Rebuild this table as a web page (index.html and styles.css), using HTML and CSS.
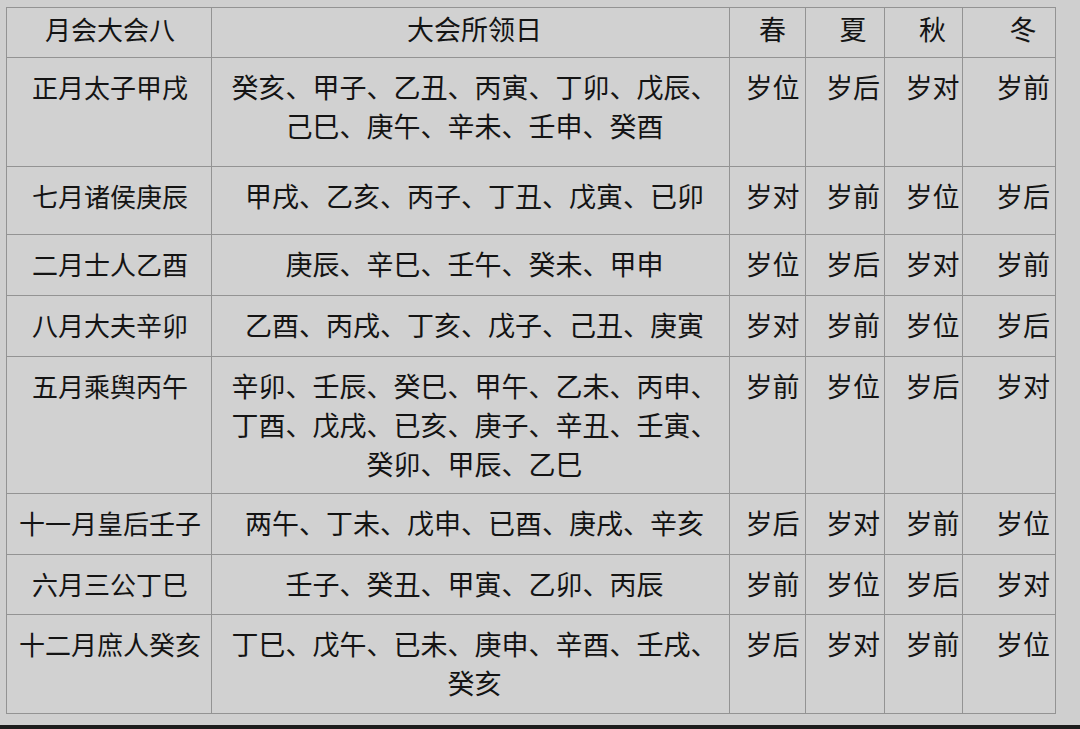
FILE: index.html
```html
<!DOCTYPE html>
<html lang="zh">
<head>
<meta charset="utf-8">
<link rel="stylesheet" href="styles.css">
</head>
<body>
<div class="page">
  <table class="grid">
    <colgroup>
      <col class="c1"><col class="c2"><col class="c3"><col class="c4"><col class="c5"><col class="c6">
    </colgroup>
    <tr class="head">
      <td class="name">月会大会八</td><td class="days">大会所领日</td><td class="s1">春</td><td class="s2">夏</td><td class="s3">秋</td><td class="s4">冬</td>
    </tr>
    <tr class="r1">
      <td class="name">正月太子甲戌</td><td class="days">癸亥、甲子、乙丑、丙寅、丁卯、戊辰、<br>己巳、庚午、辛未、壬申、癸酉</td><td class="s1">岁位</td><td class="s2">岁后</td><td class="s3">岁对</td><td class="s4">岁前</td>
    </tr>
    <tr class="r2">
      <td class="name">七月诸侯庚辰</td><td class="days">甲戌、乙亥、丙子、丁丑、戊寅、已卯</td><td class="s1">岁对</td><td class="s2">岁前</td><td class="s3">岁位</td><td class="s4">岁后</td>
    </tr>
    <tr class="r3">
      <td class="name">二月士人乙酉</td><td class="days">庚辰、辛巳、壬午、癸未、甲申</td><td class="s1">岁位</td><td class="s2">岁后</td><td class="s3">岁对</td><td class="s4">岁前</td>
    </tr>
    <tr class="r4">
      <td class="name">八月大夫辛卯</td><td class="days">乙酉、丙戌、丁亥、戊子、己丑、庚寅</td><td class="s1">岁对</td><td class="s2">岁前</td><td class="s3">岁位</td><td class="s4">岁后</td>
    </tr>
    <tr class="r5">
      <td class="name">五月乘舆丙午</td><td class="days">辛卯、壬辰、癸巳、甲午、乙未、丙申、<br>丁酉、戊戌、已亥、庚子、辛丑、壬寅、<br>癸卯、甲辰、乙巳</td><td class="s1">岁前</td><td class="s2">岁位</td><td class="s3">岁后</td><td class="s4">岁对</td>
    </tr>
    <tr class="r6">
      <td class="name">十一月皇后壬子</td><td class="days">两午、丁未、戊申、已酉、庚戌、辛亥</td><td class="s1">岁后</td><td class="s2">岁对</td><td class="s3">岁前</td><td class="s4">岁位</td>
    </tr>
    <tr class="r7">
      <td class="name">六月三公丁巳</td><td class="days">壬子、癸丑、甲寅、乙卯、丙辰</td><td class="s1">岁前</td><td class="s2">岁位</td><td class="s3">岁后</td><td class="s4">岁对</td>
    </tr>
    <tr class="r8">
      <td class="name">十二月庶人癸亥</td><td class="days">丁巳、戊午、已未、庚申、辛酉、壬戌、<br>癸亥</td><td class="s1">岁后</td><td class="s2">岁对</td><td class="s3">岁前</td><td class="s4">岁位</td>
    </tr>
  </table>
</div>
<div class="bottombar"></div>
</body>
</html>
```

FILE: styles.css
```css
html, body {
  margin: 0;
  padding: 0;
  background: #cfcfcf;
}
body {
  width: 1080px;
  height: 729px;
  overflow: hidden;
  font-family: "Noto Sans CJK SC", "Noto Sans", sans-serif;
  color: #141414;
}
.page {
  padding: 7px 0 0 6px;
  height: 718px;
}
.grid {
  border-collapse: collapse;
  table-layout: fixed;
  width: 1049px;
  background: #d1d1d1;
  border: 1px solid #8e8e8e;
}
.c1 { width: 205px; }
.c2 { width: 518px; }
.c3 { width: 76px; }
.c4 { width: 79px; }
.c5 { width: 78px; }
.c6 { width: 93px; }
.grid td {
  border: 1px solid #939393;
  font-size: 27px;
  line-height: 39px;
  text-align: center;
  vertical-align: top;
  padding: 9px 0 0 0;
  white-space: nowrap;
  overflow: visible;
}
.grid td.name { font-size: 26px; padding-left: 2px; }
.grid td.days { padding-left: 8px; }
.grid td.s1 { padding-left: 10px; }
.grid td.s2 { padding-left: 16px; }
.grid td.s3 { padding-left: 18px; }
.grid td.s4 { padding-left: 28px; }
.grid tr.head td { padding-top: 1px; }
.head { height: 50px; }
.r1 { height: 109px; }
.r2 { height: 68px; }
.r3 { height: 61px; }
.r4 { height: 61px; }
.r5 { height: 137px; }
.r6 { height: 61px; }
.r7 { height: 60px; }
.r8 { height: 99px; }
.bottombar {
  height: 4px;
  background: #1d1d1d;
}
```
